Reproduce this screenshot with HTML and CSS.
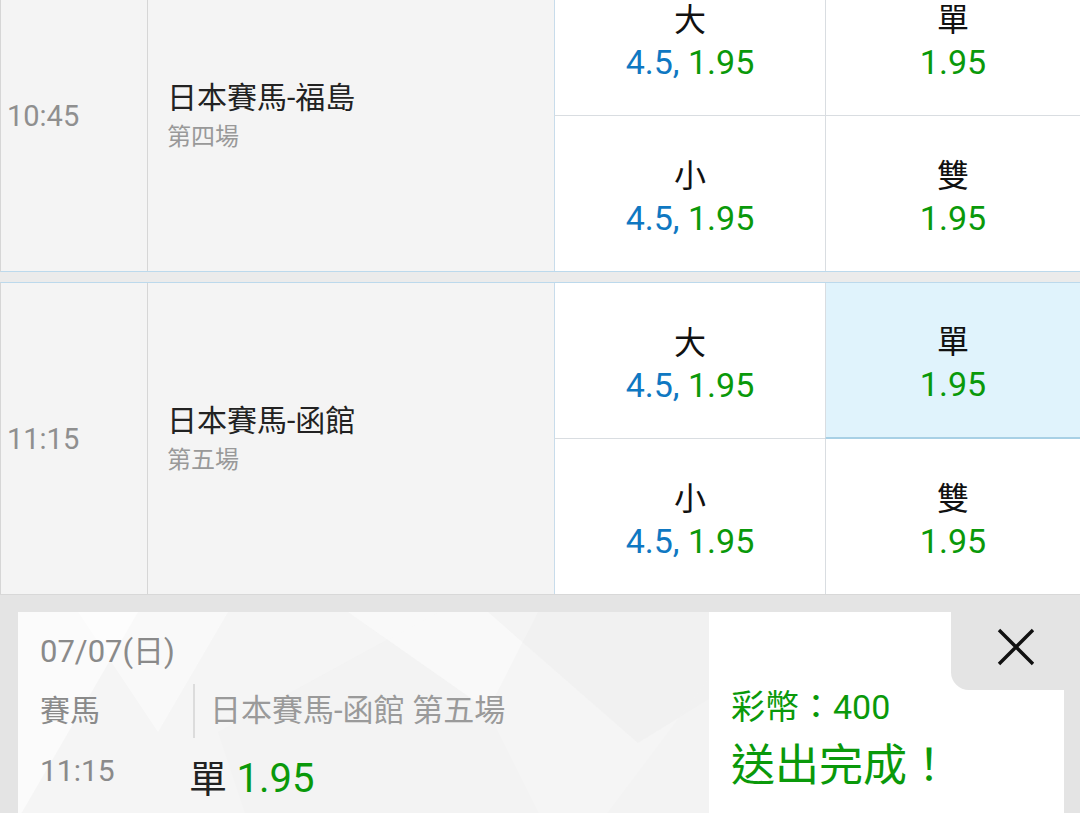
FILE: index.html
```html
<!DOCTYPE html>
<html lang="zh-Hant">
<head>
  <meta charset="UTF-8" />
  <meta name="viewport" content="width=device-width, initial-scale=1.0" />
  <title>賽馬投注</title>
  <link rel="stylesheet" href="styles.css">
</head>
<body>
  <div class="races">
    <div class="race">
      <div class="race-time">10:45</div>
      <div class="race-info">
        <div class="race-name">日本賽馬-福島</div>
        <div class="race-no">第四場</div>
      </div>
      <div class="odds">
        <div class="odd">
          <div class="odd-label">大</div>
          <div class="odd-value"><span class="line">4.5,</span> 1.95</div>
        </div>
        <div class="odd">
          <div class="odd-label">單</div>
          <div class="odd-value">1.95</div>
        </div>
        <div class="odd">
          <div class="odd-label">小</div>
          <div class="odd-value"><span class="line">4.5,</span> 1.95</div>
        </div>
        <div class="odd">
          <div class="odd-label">雙</div>
          <div class="odd-value">1.95</div>
        </div>
      </div>
    </div>
    <div class="race">
      <div class="race-time">11:15</div>
      <div class="race-info">
        <div class="race-name">日本賽馬-函館</div>
        <div class="race-no">第五場</div>
      </div>
      <div class="odds">
        <div class="odd">
          <div class="odd-label">大</div>
          <div class="odd-value"><span class="line">4.5,</span> 1.95</div>
        </div>
        <div class="odd selected">
          <div class="odd-label">單</div>
          <div class="odd-value">1.95</div>
        </div>
        <div class="odd">
          <div class="odd-label">小</div>
          <div class="odd-value"><span class="line">4.5,</span> 1.95</div>
        </div>
        <div class="odd">
          <div class="odd-label">雙</div>
          <div class="odd-value">1.95</div>
        </div>
      </div>
    </div>
  </div>

  <div class="slip">
    <div class="slip-card">
      <div class="slip-detail">
        <svg class="slip-pattern" viewBox="0 0 691 220" preserveAspectRatio="none">
          <polygon points="0,0 120,0 0,190" fill="#ffffff" opacity="0.55"/>
          <polygon points="60,0 210,0 140,110" fill="#ffffff" opacity="0.45"/>
          <polygon points="200,110 420,0 540,220 240,220" fill="#f0f0f0" opacity="0.55"/>
          <polygon points="330,0 520,0 470,90" fill="#fbfbfb" opacity="0.7"/>
          <polygon points="470,0 691,0 691,80 620,120" fill="#ededed" opacity="0.45"/>
          <polygon points="560,220 691,60 691,220" fill="#f1f1f1" opacity="0.6"/>
        </svg>
        <div class="slip-date">07/07(日)</div>
        <div class="slip-row">
          <div class="slip-key">賽馬</div>
          <div class="slip-event">日本賽馬-函館 第五場</div>
        </div>
        <div class="slip-row pick-row">
          <div class="slip-key">11:15</div>
          <div class="slip-pick">單 <span class="pick-odd">1.95</span></div>
        </div>
      </div>
      <div class="slip-result">
        <button class="slip-close" aria-label="關閉">
          <svg width="38" height="38" viewBox="0 0 38 38">
            <path d="M2 2 L36 36 M36 2 L2 36" stroke="#111" stroke-width="3.4" fill="none"/>
          </svg>
        </button>
        <div class="slip-stake">彩幣：400</div>
        <div class="slip-done">送出完成！</div>
      </div>
    </div>
  </div>
</body>
</html>
```

FILE: styles.css
```css
:root {
  --blue: #0f78c2;
  --green: #0a990a;
  --cell-border: #d9dde1;
  --row-border: #bcd9ec;
  --panel: #e4e4e4;
}
html, body {
  margin: 0;
  height: 100%;
  overflow: hidden;
}
body {
  background: #ebebeb;
  font-family: Roboto, "Noto Sans CJK TC", sans-serif;
  color: #222;
}
.races {
  margin-top: -41px;
}
.race {
  display: grid;
  grid-template-columns: 147px 406px 1fr;
  height: 313px;
  box-sizing: border-box;
  border-top: 1px solid var(--row-border);
  border-bottom: 1px solid var(--row-border);
  border-left: 1px solid #d6d6d6;
  background: #f4f4f4;
  margin-bottom: 10px;
}
.race:last-child {
  margin-bottom: 0;
  border-bottom-color: #d8d8d8;
}
.race-time {
  display: flex;
  align-items: center;
  padding-left: 6px;
  font-size: 29px;
  color: #8f8f8f;
  border-right: 1px solid #d6d6d6;
}
.race-info {
  display: flex;
  flex-direction: column;
  justify-content: center;
  padding-left: 19px;
}
.race-name {
  font-size: 30px;
  line-height: 42px;
  color: #222;
}
.race-no {
  font-size: 24px;
  line-height: 36px;
  color: #999;
}
.odds {
  display: grid;
  grid-template-columns: 271px 1fr;
  grid-template-rows: 155px 156px;
  background: #fff;
}
.odd {
  display: flex;
  flex-direction: column;
  align-items: center;
  justify-content: center;
  padding-top: 10px;
  box-sizing: border-box;
  border-left: 1px solid var(--cell-border);
}
.odd:nth-child(1),
.odd:nth-child(3) {
  border-left-color: #c8dceb;
}
.odd:nth-child(n+3) {
  border-top: 1px solid var(--cell-border);
}
.odd.selected {
  background: #e0f3fc;
  border-bottom: 2px solid #a8d0e5;
  margin-bottom: -1px;
}
.odd.selected + .odd + .odd {
  border-top-color: #a8d0e5;
}
.odd-label {
  font-size: 32px;
  line-height: 38px;
  color: #111;
}
.odd-value {
  font-size: 34px;
  line-height: 46px;
  color: var(--green);
}
.odd-value .line {
  color: var(--blue);
}
.slip {
  background: var(--panel);
  border-top: 1px solid #d8d8d8;
  margin-top: -1px;
  padding: 17px 16px 0 18px;
}
.slip-card {
  display: grid;
  grid-template-columns: 691px 1fr;
  height: 240px;
}
.slip-detail {
  position: relative;
  background: #f5f5f5;
  padding: 18px 0 0 22px;
  overflow: hidden;
}
.slip-pattern {
  position: absolute;
  left: 0;
  top: 0;
  width: 100%;
  height: 100%;
}
.slip-date,
.slip-row {
  position: relative;
}
.slip-date {
  font-size: 31px;
  line-height: 44px;
  color: #8a8a8a;
}
.slip-row {
  display: grid;
  grid-template-columns: 153px 1fr;
  align-items: center;
  margin-top: 10px;
}
.slip-key {
  font-size: 30px;
  line-height: 54px;
  color: #8a8a8a;
}
.slip-event {
  border-left: 2px solid #dcdcdc;
  padding-left: 15px;
  font-size: 31px;
  line-height: 54px;
  color: #9a9a9a;
  white-space: nowrap;
}
.pick-row {
  grid-template-columns: 149px 1fr;
  align-items: start;
  margin-top: 8px;
}
.pick-row .slip-key {
  line-height: 50px;
  font-size: 30px;
}
.slip-pick {
  padding-top: 8px;
  font-size: 38px;
  line-height: 50px;
  color: #222;
}
.pick-odd {
  font-size: 40px;
  color: var(--green);
}
.slip-result {
  position: relative;
  background: #fff;
  padding: 75px 0 0 22px;
}
.slip-close {
  position: absolute;
  top: 0;
  right: 0;
  width: 113px;
  height: 78px;
  border: none;
  padding: 0 0 8px 16px;
  background: var(--panel);
  border-bottom-left-radius: 18px;
  display: flex;
  align-items: center;
  justify-content: center;
  cursor: pointer;
}
.slip-stake {
  font-size: 34px;
  line-height: 40px;
  color: var(--green);
}
.slip-done {
  margin-top: 11px;
  font-size: 44px;
  line-height: 56px;
  color: var(--green);
}
```
